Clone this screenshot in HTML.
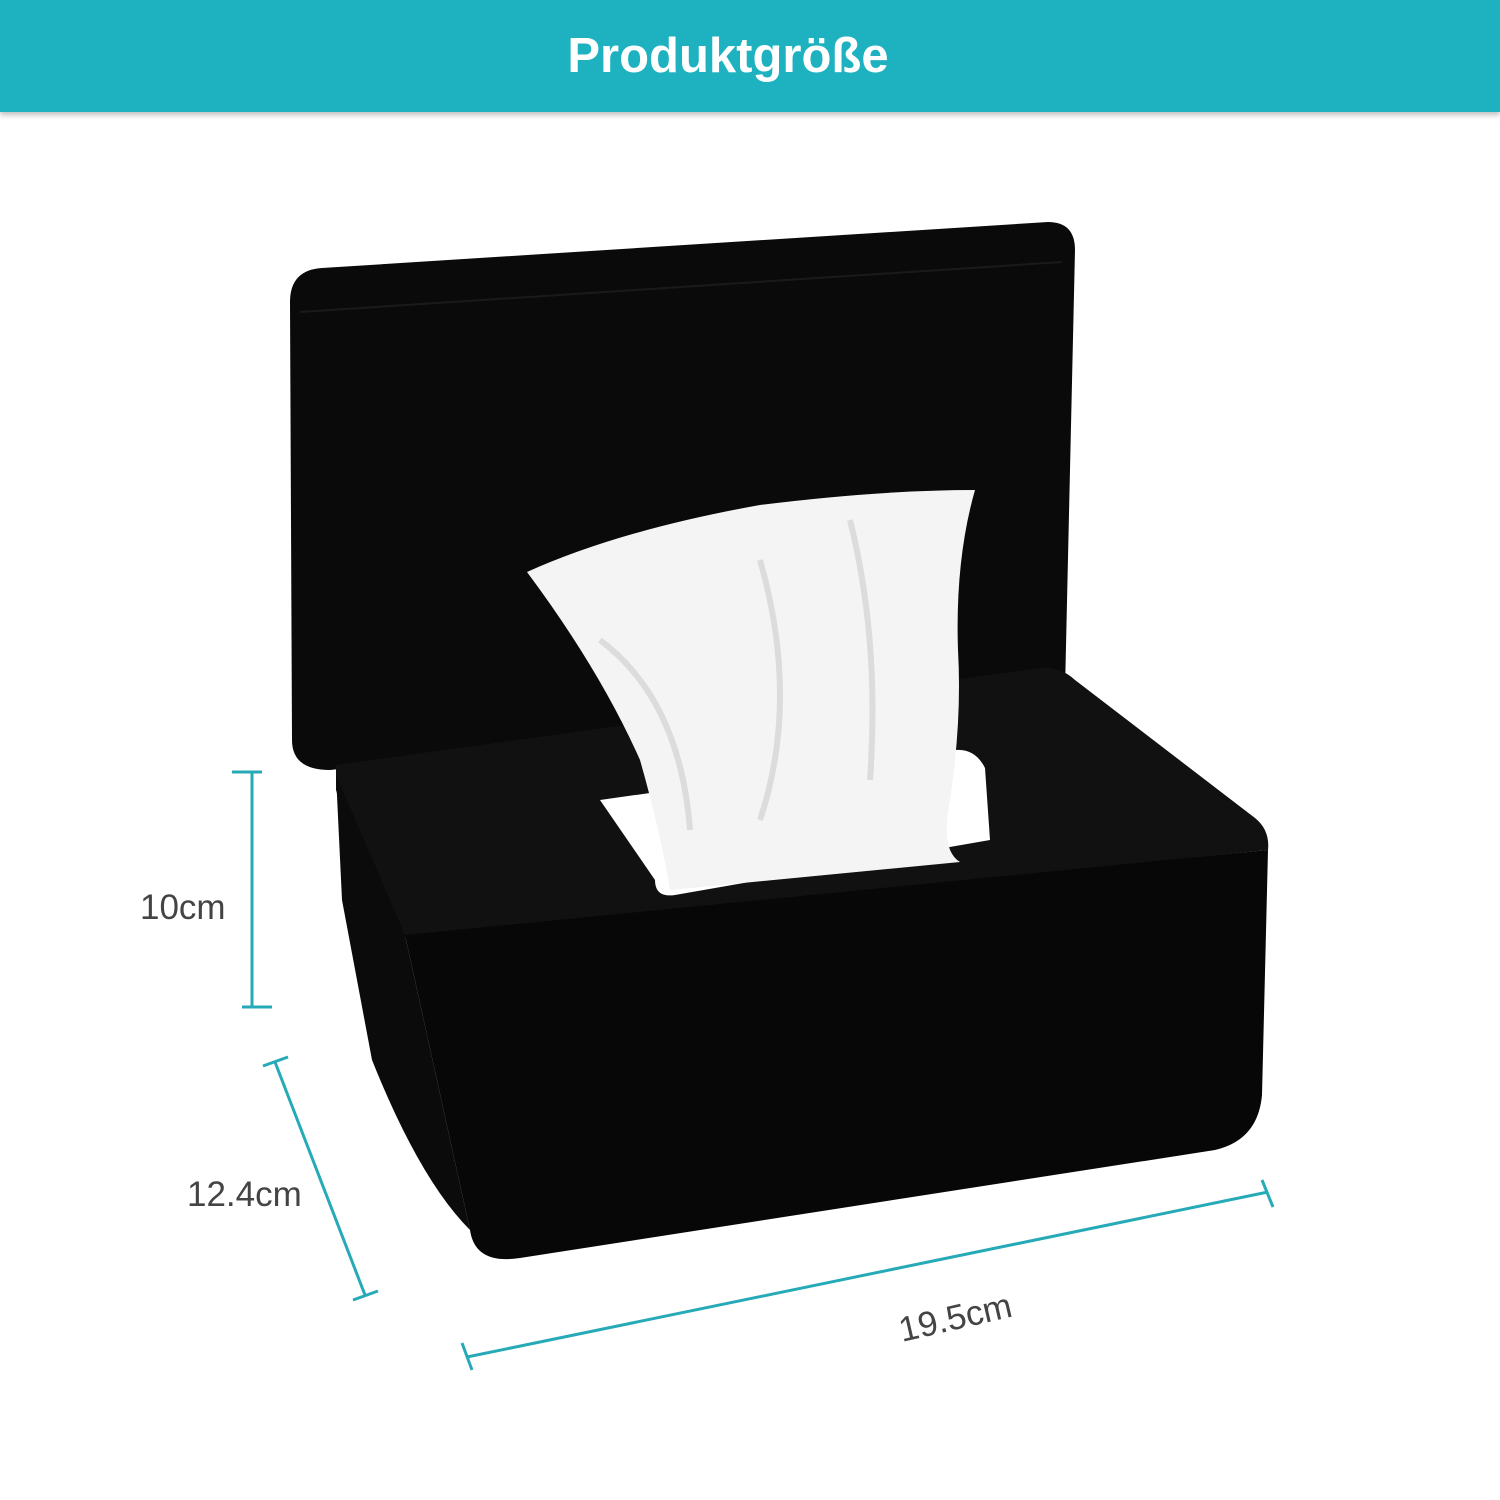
<!DOCTYPE html>
<html><head><meta charset="utf-8"><style>
html,body{margin:0;padding:0;background:#fff;}
body{width:1500px;height:1500px;position:relative;overflow:hidden;font-family:"Liberation Sans",sans-serif;}
.hdr{position:absolute;left:0;top:0;width:1500px;height:112px;background:#1eb2c1;box-shadow:0 3px 5px rgba(0,0,0,0.25);}
.hdr span{position:absolute;left:0;width:1456px;text-align:center;top:28px;font-size:49px;font-weight:bold;color:#fff;}
svg{position:absolute;left:0;top:0;}
</style></head><body>
<svg width="1500" height="1500" viewBox="0 0 1500 1500">
 <path d="M322 268 L1048 222 Q1075 222 1075 250 L1065 690 L330 770 Q292 770 292 740 L290 302 Q290 270 322 268 Z" fill="#0a0a0a"/>
 <path d="M300 312 L1062 262" stroke="#1a1a1a" stroke-width="2"/>
 <path d="M336 765 L1040 668 Q1060 666 1075 680 L1255 818 Q1270 830 1268 850 L405 938 Q385 920 360 870 L336 790 Z" fill="#111"/>
 <path d="M600 800 L955 750 Q975 748 985 768 L990 840 L675 895 Q655 898 655 880 Z" fill="#fff"/>
 <path d="M405 935 L1268 850 L1262 1095 Q1258 1140 1215 1150 L520 1258 Q475 1265 470 1230 Z" fill="#070707"/>
 <path d="M336 775 L405 935 L470 1230 Q420 1180 372 1060 L342 900 Z" fill="#0b0b0b"/>
 <path d="M527 572 Q620 530 760 505 Q880 490 975 490 Q955 560 958 650 Q962 720 950 800 Q940 850 960 862 L670 890 Q660 830 640 760 Q600 670 527 572 Z" fill="#f4f4f4"/>
 <path d="M600 640 Q680 700 690 830 M760 560 Q800 700 760 820 M850 520 Q880 640 870 780" stroke="#dcdcdc" stroke-width="6" fill="none"/>
 <g stroke="#27aab7" stroke-width="3" fill="none">
  <line x1="252" y1="772" x2="252" y2="1007"/><line x1="232" y1="772" x2="262" y2="772"/><line x1="242" y1="1007" x2="272" y2="1007"/>
  <line x1="275" y1="1062" x2="365" y2="1295"/><line x1="263" y1="1066" x2="288" y2="1057"/><line x1="353" y1="1300" x2="378" y2="1291"/>
  <line x1="467" y1="1357" x2="1268" y2="1192"/><line x1="462" y1="1343" x2="472" y2="1370"/><line x1="1262" y1="1180" x2="1273" y2="1207"/>
 </g>
 <g fill="#444" font-family="Liberation Sans, sans-serif" font-size="35">
  <text x="140" y="919">10cm</text>
  <text x="187" y="1206">12.4cm</text>
  <text x="902" y="1342" transform="rotate(-13 902 1342)">19.5cm</text>
 </g>
</svg>
<div class="hdr"><span>Produktgröße</span></div>
</body></html>
